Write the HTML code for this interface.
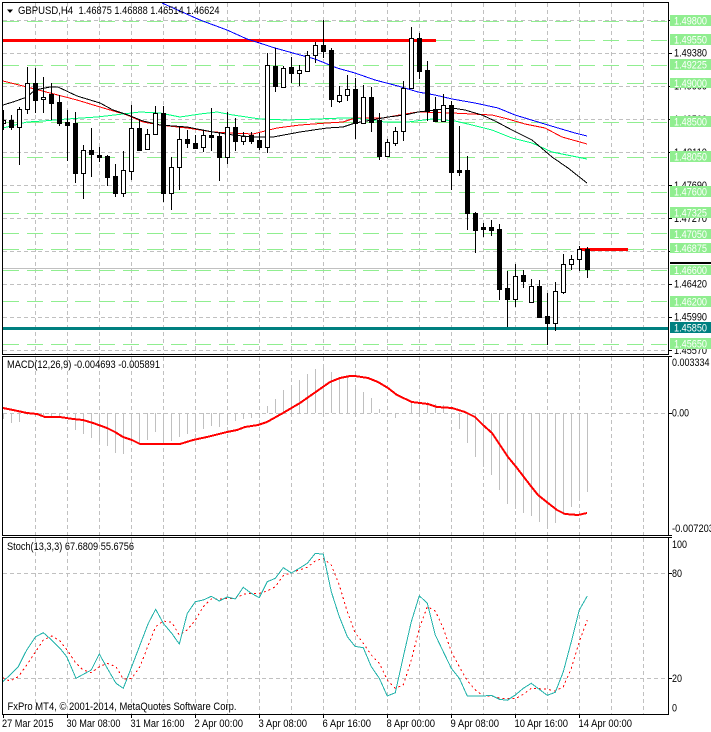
<!DOCTYPE html>
<html><head><meta charset="utf-8"><title>GBPUSD,H4</title>
<style>
html,body{margin:0;padding:0;background:#fff;width:711px;height:732px;overflow:hidden}
svg{display:block}
text{font-family:"Liberation Sans",sans-serif;font-size:11px;fill:#000}
.c{shape-rendering:crispEdges}
.g{fill:#fff}
</style></head><body>
<svg width="711" height="732" viewBox="0 0 711 732" xmlns="http://www.w3.org/2000/svg">
<rect width="711" height="732" fill="#fff"/>
<defs>
<clipPath id="main"><rect x="3" y="3" width="665" height="351"/></clipPath>
<clipPath id="macd"><rect x="3" y="357" width="665" height="178"/></clipPath>
<clipPath id="st"><rect x="3" y="538" width="665" height="176"/></clipPath>
</defs>

<!-- grid: vertical -->
<g class="c" fill="none" stroke="#c0c0c0" stroke-dasharray="4 3">
<path clip-path="url(#main)" d="M35.5 3V354M67.5 3V354M99.5 3V354M131.5 3V354M163.5 3V354M195.5 3V354M227.5 3V354M259.5 3V354M291.5 3V354M323.5 3V354M355.5 3V354M387.5 3V354M419.5 3V354M451.5 3V354M483.5 3V354M515.5 3V354M547.5 3V354M579.5 3V354M611.5 3V354M643.5 3V354"/>
<path d="M35.5 357V535M67.5 357V535M99.5 357V535M131.5 357V535M163.5 357V535M195.5 357V535M227.5 357V535M259.5 357V535M291.5 357V535M323.5 357V535M355.5 357V535M387.5 357V535M419.5 357V535M451.5 357V535M483.5 357V535M515.5 357V535M547.5 357V535M579.5 357V535M611.5 357V535M643.5 357V535"/>
<path d="M35.5 538V714M67.5 538V714M99.5 538V714M131.5 538V714M163.5 538V714M195.5 538V714M227.5 538V714M259.5 538V714M291.5 538V714M323.5 538V714M355.5 538V714M387.5 538V714M419.5 538V714M451.5 538V714M483.5 538V714M515.5 538V714M547.5 538V714M579.5 538V714M611.5 538V714M643.5 538V714"/>
<path d="M3 20.5H668M3 53.5H668M3 86.5H668M3 119.5H668M3 152.5H668M3 185.5H668M3 218.5H668M3 251.5H668M3 284.5H668M3 317.5H668M3 350.5H668"/>
<path d="M3 413.5H668"/>
<path d="M3 573.5H668M3 678.5H668"/>
</g>

<!-- green horizontal levels -->
<g class="c" fill="none" stroke="#90ee90" stroke-dasharray="16 8">
<path d="M3 21.5H668M3 40.5H668M3 65.5H668M3 83.5H668M3 122.5H668M3 157.5H668M3 192.5H668M3 213.5H668M3 233.5H668M3 270.5H668M3 301.5H668M3 344.5H668M3 249.5H668"/>
</g>

<!-- bid line, levels -->
<g class="c">
<rect x="3" y="268" width="665" height="1" fill="#c0c0c0"/>
<rect x="3" y="39" width="433" height="3" fill="#f00"/>
<rect x="580" y="248" width="48" height="3" fill="#f00"/>
<rect x="3" y="327" width="665" height="3" fill="#008080"/>
</g>

<!-- moving averages -->
<g class="c" fill="none" stroke-width="1" clip-path="url(#main)">
<polyline stroke="#0000ff" points="162,3 200,20 227,30 247,39 275,48 300,55 315,59 337,68 355,73 375,80 398,86 418,92 435,95 452,99 475,103 498,108 515,115 538,122 558,128 575,133 587,136"/>
<polyline stroke="#f00" points="3,81 27,87 50,93 77,100 100,107 127,115 143,122 160,125 187,128 213,132 233,133 253,134 277,128 300,125 327,123 343,122 355,118 383,118 405,114 418,112 452,113 492,115 508,119 525,124 545,128 562,137 587,144"/>
<polyline stroke="#00ff7f" points="3,128 27,122 43,121 67,119 97,117 123,114 140,112 160,113 180,117 200,114 217,112 233,115 260,119 287,120 317,119 343,118 355,118 385,122 408,122 432,119 455,121 472,125 492,130 512,138 532,143 552,152 572,156 587,159"/>
<polyline stroke="#000" points="3,105 13,102 27,97 35,90 50,87 58,87 77,96 100,103 113,110 128,115 143,121 160,125 187,127 213,132 233,135 253,137 273,137 300,132 327,128 343,127 355,123 372,120 388,117 405,115 418,112 435,110 452,108 465,110 482,115 495,121 512,130 532,140 552,157 568,168 587,183"/>
</g>

<!-- candles -->
<g class="c" clip-path="url(#main)">
<path fill="none" stroke="#000" d="M3.5 110V130M11.5 115V130M19.5 107V165M27.5 67V114M35.5 68V113M43.5 77V113M51.5 83V120M59.5 95V126M67.5 110V161M75.5 112V183M83.5 145V199M91.5 128V177M99.5 147V162M107.5 155V186M115.5 164V197M123.5 151V197M131.5 105V180M139.5 120V151M147.5 129V150M155.5 106V135M163.5 106V202M171.5 157V210M179.5 126V190M187.5 130V148M195.5 135V148M203.5 130V152M211.5 108V151M219.5 132V181M227.5 112V164M235.5 118V151M243.5 132V145M251.5 132V144M259.5 133V150M267.5 53V153M275.5 48V92M283.5 66V88M291.5 57V83M299.5 65V86M307.5 51V71M315.5 42V63M323.5 20V58M331.5 48V107M339.5 86V103M347.5 75V101M355.5 78V139M363.5 85V123M371.5 87V132M379.5 113V160M387.5 139V156M395.5 127V146M403.5 81V141M411.5 27V88M419.5 33V79M427.5 61V121M435.5 97V122M443.5 94V122M451.5 101V190M459.5 126V176M467.5 156V230M475.5 212V253M483.5 223V237M491.5 220V236M499.5 224V300M507.5 271V327M515.5 264V307M523.5 270V288M531.5 279V303M539.5 280V317M547.5 293V345M555.5 282V331M563.5 254V294M571.5 255V270M579.5 246V271M587.5 247V278"/>
<path fill="#fff" stroke="#000" d="M3.5 120.5h2v3h-2zM17.5 109.5h4v18h-4zM25.5 83.5h4v26h-4zM41.5 97.5h4v2h-4zM81.5 150.5h4v23h-4zM121.5 170.5h4v23h-4zM129.5 128.5h4v43h-4zM145.5 134.5h4v15h-4zM153.5 113.5h4v21h-4zM169.5 167.5h4v26h-4zM177.5 139.5h4v28h-4zM201.5 135.5h4v12h-4zM225.5 127.5h4v30h-4zM241.5 136.5h4v5h-4zM265.5 65.5h4v82h-4zM281.5 68.5h4v19h-4zM297.5 70.5h4v3h-4zM305.5 55.5h4v16h-4zM313.5 45.5h4v10h-4zM337.5 95.5h4v6h-4zM345.5 89.5h4v6h-4zM361.5 97.5h4v26h-4zM385.5 142.5h4v14h-4zM393.5 131.5h4v12h-4zM401.5 88.5h4v43h-4zM409.5 38.5h4v50h-4zM441.5 105.5h4v16h-4zM513.5 276.5h4v23h-4zM529.5 286.5h4v16h-4zM553.5 291.5h4v32h-4zM561.5 264.5h4v28h-4zM569.5 259.5h4v5h-4zM577.5 249.5h4v10h-4z"/>
<path fill="#000" stroke="#000" d="M9.5 120.5h4v7h-4zM33.5 83.5h4v17h-4zM49.5 94.5h4v9h-4zM57.5 102.5h4v21h-4zM65.5 122.5h4v3h-4zM73.5 123.5h4v50h-4zM89.5 150.5h4v4h-4zM97.5 155.5h4v2h-4zM105.5 156.5h4v21h-4zM113.5 176.5h4v17h-4zM137.5 128.5h4v22h-4zM161.5 113.5h4v80h-4zM185.5 139.5h4v4h-4zM193.5 143.5h4v5h-4zM209.5 135.5h4v2h-4zM217.5 136.5h4v21h-4zM233.5 127.5h4v14h-4zM249.5 135.5h4v6h-4zM257.5 140.5h4v7h-4zM273.5 66.5h4v20h-4zM289.5 67.5h4v6h-4zM321.5 45.5h4v6h-4zM329.5 50.5h4v49h-4zM353.5 89.5h4v34h-4zM369.5 97.5h4v25h-4zM377.5 120.5h4v36h-4zM417.5 38.5h4v33h-4zM425.5 70.5h4v41h-4zM433.5 109.5h4v12h-4zM449.5 105.5h4v67h-4zM457.5 170.5h4v2h-4zM465.5 170.5h4v43h-4zM473.5 213.5h4v17h-4zM481.5 227.5h4v2h-4zM489.5 227.5h4v3h-4zM497.5 229.5h4v60h-4zM505.5 288.5h4v11h-4zM521.5 275.5h4v6h-4zM537.5 286.5h4v31h-4zM545.5 316.5h4v7h-4zM585.5 249.5h4v20h-4z"/>
</g>

<!-- MACD histogram -->
<path class="c" fill="none" stroke="#c0c0c0" d="M3.5 413V419M11.5 413V423M19.5 413V422M27.5 413V415M35.5 413V414M43.5 413V415M51.5 413V416M59.5 413V416M67.5 413V418M75.5 413V430M83.5 413V434M91.5 413V438M99.5 413V442M107.5 413V446M115.5 413V453M123.5 413V454M131.5 413V445M139.5 413V443M147.5 413V440M155.5 413V432M163.5 413V441M171.5 413V441M179.5 413V437M187.5 413V434M195.5 413V432M203.5 413V429M211.5 413V426M219.5 413V427M227.5 413V425M235.5 413V421M243.5 413V419M251.5 413V418M259.5 413V418M267.5 413V406M275.5 413V399M283.5 413V390M291.5 413V385M299.5 413V380M307.5 413V374M315.5 413V369M323.5 413V366M331.5 413V372M339.5 413V377M347.5 413V377M355.5 413V386M363.5 413V392M371.5 413V398M379.5 413V409M395.5 413V418M411.5 413V403M419.5 413V403M427.5 413V402M435.5 413V404M443.5 413V405M451.5 413V418M459.5 413V429M467.5 413V443M475.5 413V457M483.5 413V467M491.5 413V475M499.5 413V490M507.5 413V504M515.5 413V509M523.5 413V513M531.5 413V516M539.5 413V522M547.5 413V527M555.5 413V523M563.5 413V515M571.5 413V507M579.5 413V497M587.5 413V492"/>
<!-- MACD signal -->
<polyline class="c" clip-path="url(#macd)" fill="none" stroke="#f00" stroke-width="2" points="3,408 13,410 27,413 37,414 45,417 60,417 73,419 83,420 93,423 107,428 115,432 123,437 132,440 140,444 180,444 193,440 207,437 227,432 237,430 245,427 258,425 267,422 283,413 300,403 320,389 330,382 340,378 350,376 355,376 368,378 378,382 388,388 397,395 412,402 428,404 437,407 452,408 465,412 475,417 483,425 492,433 500,445 508,457 517,468 530,485 538,495 548,503 557,510 565,514 578,515 587,513"/>

<!-- Stochastic -->
<g class="c" clip-path="url(#st)" fill="none">
<g stroke="#f00" stroke-dasharray="2 3">
<path d="M2.7 677.7L10 681L18.3 676.7L26.7 665L35.7 651.7L43.3 640L51.7 636L60 641L68.3 651.7L76 663.3L83.3 670L91.3 672.7L99.3 666.7L107.3 663.3L116 666.7L123.3 679L131.7 678.3L140 666.7L148.3 645L155.7 626.7L163.3 621L171.7 622.3L179.3 635L187.3 630L195.3 620L203.3 606.7L211.3 599L219.3 599L227.3 598.3L235.3 598.3L243.3 594.3L251.3 593.3L259.3 593.3L267.3 591L275.3 586.7L283.3 575.7L291.3 572.7L299.3 570L307.3 567.3L315.3 561L323.3 558.3L331.3 565L339.3 585L347.3 611.7L355 632.7L363.3 643.3L371.3 655L379.3 663.3L387.3 680L395.3 688.3L403.3 685L411.3 660L419.3 628.3L427.3 606.7L435.3 611L443.3 628.3L451.3 651.7L459.3 666.7L467.3 680.7L475.3 690L483.3 696L491.3 696L499.3 698L507.3 698.7L515.3 698.7L523.3 694.3L531.3 688.3L539.3 688.7L547.3 689.3L555.3 691L563.3 686.7L571.3 668.3L579.3 641.7L587.3 620"/>
</g>
<path stroke="#20b2aa" d="M2.7 681.7L10 675L18.3 666.7L26.7 650L35.7 636.7L43.3 632.7L51.7 640L60 648.3L66.7 656.7L76 678.3L83.3 674.3L91.3 670L99.3 654L107.3 668.3L116 683.3L123.3 688.3L131.7 666.7L140 645L148.3 623.3L155.7 609.3L163.3 623.3L171.7 633.3L179.3 644L187.3 613.3L195.3 601.7L203.3 600L211.3 596.3L219.3 601L227.3 597L235.3 599L243.3 587.3L251.3 593.3L259.3 597.7L267.3 581.7L275.3 578.3L283.3 567.7L291.3 573L299.3 568.3L307.3 563.3L315.3 553.3L323.3 554.3L331.3 591.7L339.3 616.7L347.3 636.7L355 646.3L363.3 647.7L371.3 666.7L379.3 678.3L387.3 696L395.3 692.7L403.3 656.7L411.3 621.7L419.3 595.7L427.3 603.3L435.3 635L443.3 651.7L451.3 668.3L459.3 678.3L467.3 696L475.3 696L483.3 696L491.3 695.3L499.3 699.3L507.3 700.3L515.3 695L523.3 688.3L531.3 683.3L539.3 689.3L547.3 695.3L555.3 692.3L563.3 671.7L571.3 641.7L579.3 610L587.3 596"/>
</g>

<!-- frames and axes -->
<g class="c" fill="#000">
<rect x="2" y="2" width="667" height="1"/>
<rect x="2" y="2" width="1" height="353"/>
<rect x="2" y="354" width="667" height="1"/>
<rect x="2" y="356" width="667" height="1"/>
<rect x="2" y="356" width="1" height="180"/>
<rect x="2" y="535" width="667" height="1"/>
<rect x="2" y="537" width="667" height="1"/>
<rect x="2" y="537" width="1" height="178"/>
<rect x="2" y="714" width="667" height="1"/>
<rect x="668" y="2" width="1" height="353"/>
<rect x="668" y="356" width="1" height="180"/>
<rect x="668" y="537" width="1" height="178"/>
<!-- right ticks -->
<path stroke="#000" fill="none" d="M669 20.5h3M669 53.5h3M669 86.5h3M669 119.5h3M669 152.5h3M669 185.5h3M669 218.5h3M669 251.5h3M669 284.5h3M669 317.5h3M669 350.5h3M669 356.5h3M669 413.5h3M669 535.5h3M669 537.5h3M669 573.5h3M669 678.5h3"/>
<!-- bottom ticks -->
<path stroke="#000" fill="none" d="M3.5 715v3M67.5 715v3M131.5 715v3M195.5 715v3M259.5 715v3M323.5 715v3M387.5 715v3M451.5 715v3M515.5 715v3M579.5 715v3"/>
</g>

<!-- header -->
<path d="M7 9.5h6l-3 3.500z" fill="#000"/>
<text x="18" y="14" textLength="55" lengthAdjust="spacingAndGlyphs">GBPUSD,H4</text>
<text x="78.500" y="14" textLength="141" lengthAdjust="spacingAndGlyphs">1.46875 1.46888 1.46514 1.46624</text>
<text x="7" y="368" textLength="153" lengthAdjust="spacingAndGlyphs">MACD(12,26,9) -0.004693 -0.005891</text>
<text x="7" y="550" textLength="127" lengthAdjust="spacingAndGlyphs">Stoch(13,3,3) 67.6809 55.6756</text>
<text x="7.500" y="710" textLength="229" lengthAdjust="spacingAndGlyphs">FxPro MT4, © 2001-2014, MetaQuotes Software Corp.</text>

<!-- right price labels (black) -->
<g>
<text x="674" y="56.500" textLength="33" lengthAdjust="spacingAndGlyphs">1.49380</text>
<text x="674" y="89.500" textLength="33" lengthAdjust="spacingAndGlyphs">1.49000</text>
<text x="674" y="123" textLength="33" lengthAdjust="spacingAndGlyphs">1.48500</text>
<text x="674" y="156" textLength="33" lengthAdjust="spacingAndGlyphs">1.48110</text>
<text x="674" y="189" textLength="33" lengthAdjust="spacingAndGlyphs">1.47690</text>
<text x="674" y="222" textLength="33" lengthAdjust="spacingAndGlyphs">1.47270</text>
<text x="674" y="287.500" textLength="33" lengthAdjust="spacingAndGlyphs">1.46420</text>
<text x="674" y="320.500" textLength="33" lengthAdjust="spacingAndGlyphs">1.45990</text>
<text x="674" y="354" textLength="33" lengthAdjust="spacingAndGlyphs">1.45570</text>
</g>
<rect class="c" x="670" y="262" width="41" height="2" fill="#000"/>

<!-- green labels -->
<g class="c" fill="#90ee90">
<rect x="670" y="15" width="41" height="11"/>
<rect x="670" y="34" width="41" height="11"/>
<rect x="670" y="59" width="41" height="11"/>
<rect x="670" y="78" width="41" height="10"/>
<rect x="670" y="116" width="41" height="11"/>
<rect x="670" y="151" width="41" height="11"/>
<rect x="670" y="186" width="41" height="11"/>
<rect x="670" y="207" width="41" height="11"/>
<rect x="670" y="229" width="41" height="10"/>
<rect x="670" y="243" width="41" height="10"/>
<rect x="670" y="265" width="41" height="10"/>
<rect x="670" y="296" width="41" height="11"/>
<rect x="670" y="338" width="41" height="11"/>
<rect x="670" y="322" width="41" height="11" fill="#008080"/>
</g>
<g>
<text class="g" x="674" y="24.500" textLength="33" lengthAdjust="spacingAndGlyphs">1.49800</text>
<text class="g" x="674" y="43.500" textLength="33" lengthAdjust="spacingAndGlyphs">1.49550</text>
<text class="g" x="674" y="68.500" textLength="33" lengthAdjust="spacingAndGlyphs">1.49225</text>
<text class="g" x="674" y="87" textLength="33" lengthAdjust="spacingAndGlyphs">1.49000</text>
<text class="g" x="674" y="125.500" textLength="33" lengthAdjust="spacingAndGlyphs">1.48500</text>
<text class="g" x="674" y="160.500" textLength="33" lengthAdjust="spacingAndGlyphs">1.48050</text>
<text class="g" x="674" y="195.500" textLength="33" lengthAdjust="spacingAndGlyphs">1.47600</text>
<text class="g" x="674" y="216.500" textLength="33" lengthAdjust="spacingAndGlyphs">1.47325</text>
<text class="g" x="674" y="238" textLength="33" lengthAdjust="spacingAndGlyphs">1.47050</text>
<text class="g" x="674" y="252" textLength="33" lengthAdjust="spacingAndGlyphs">1.46875</text>
<text class="g" x="674" y="274" textLength="33" lengthAdjust="spacingAndGlyphs">1.46600</text>
<text class="g" x="674" y="305.500" textLength="33" lengthAdjust="spacingAndGlyphs">1.46200</text>
<text class="g" x="674" y="331.500" textLength="33" lengthAdjust="spacingAndGlyphs">1.45850</text>
<text class="g" x="674" y="347.500" textLength="33" lengthAdjust="spacingAndGlyphs">1.45650</text>
</g>

<!-- indicator axis labels -->
<text x="672" y="366" textLength="37.500" lengthAdjust="spacingAndGlyphs">0.003334</text>
<text x="672" y="416.500" textLength="17" lengthAdjust="spacingAndGlyphs">0.00</text>
<text x="672" y="532" textLength="42" lengthAdjust="spacingAndGlyphs">-0.007203</text>
<text x="672" y="548" textLength="15" lengthAdjust="spacingAndGlyphs">100</text>
<text x="672" y="577" textLength="10" lengthAdjust="spacingAndGlyphs">80</text>
<text x="672" y="682" textLength="10" lengthAdjust="spacingAndGlyphs">20</text>
<text x="672" y="711.500" textLength="5" lengthAdjust="spacingAndGlyphs">0</text>

<!-- time axis -->
<text x="2" y="727" textLength="51.500" lengthAdjust="spacingAndGlyphs">27 Mar 2015</text>
<text x="66.500" y="727" textLength="54" lengthAdjust="spacingAndGlyphs">30 Mar 08:00</text>
<text x="130.500" y="727" textLength="54" lengthAdjust="spacingAndGlyphs">31 Mar 16:00</text>
<text x="194.500" y="727" textLength="48.500" lengthAdjust="spacingAndGlyphs">2 Apr 00:00</text>
<text x="258.500" y="727" textLength="48.500" lengthAdjust="spacingAndGlyphs">3 Apr 08:00</text>
<text x="322.500" y="727" textLength="48.500" lengthAdjust="spacingAndGlyphs">6 Apr 16:00</text>
<text x="386.500" y="727" textLength="48.500" lengthAdjust="spacingAndGlyphs">8 Apr 00:00</text>
<text x="450.500" y="727" textLength="48.500" lengthAdjust="spacingAndGlyphs">9 Apr 08:00</text>
<text x="514.500" y="727" textLength="53.500" lengthAdjust="spacingAndGlyphs">10 Apr 16:00</text>
<text x="578.500" y="727" textLength="53.500" lengthAdjust="spacingAndGlyphs">14 Apr 00:00</text>
</svg>
</body></html>
